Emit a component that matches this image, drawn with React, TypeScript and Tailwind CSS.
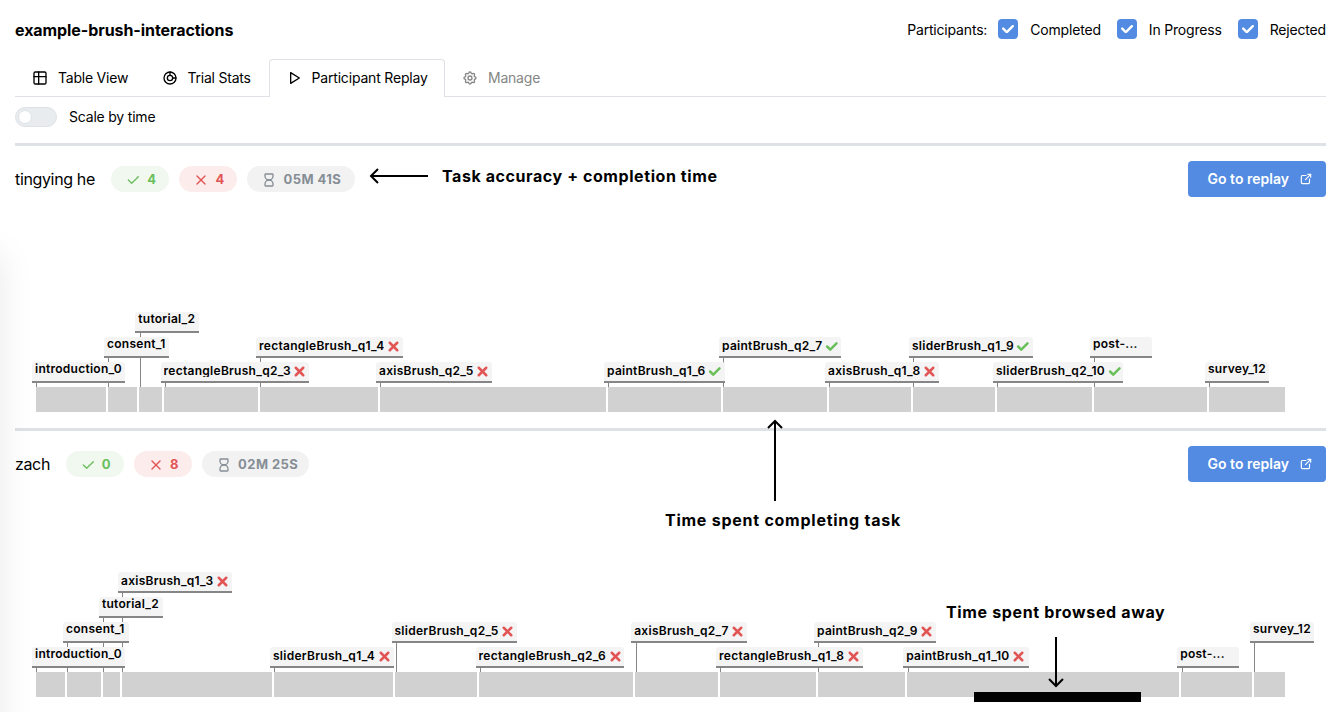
import React from "react";
import {
  TbTable,
  TbChartDonut2,
  TbPlayerPlay,
  TbSettings,
  TbCheck,
  TbX,
  TbHourglassEmpty,
  TbExternalLink,
} from "react-icons/tb";

type Result = "right" | "wrong" | "none";

interface Task {
  name: string;
  row: number;
  left: number;
  right: number;
  result: Result;
  barStart: number;
  barEnd: number;
}

const t = (
  name: string,
  row: number,
  left: number,
  right: number,
  result: Result,
  barStart: number,
  barEnd: number,
): Task => ({ name, row, left, right, result, barStart, barEnd });

const TINGYING: Task[] = [
  t("introduction_0", 1, 32, 125, "none", 36, 106),
  t("consent_1", 2, 104, 169, "none", 108, 137),
  t("tutorial_2", 3, 135.3, 199, "none", 139.4, 162),
  t("rectangleBrush_q2_3", 1, 160.5, 309, "wrong", 164, 258),
  t("rectangleBrush_q1_4", 2, 256, 403, "wrong", 260, 378),
  t("axisBrush_q2_5", 1, 376, 492, "wrong", 380, 606),
  t("paintBrush_q1_6", 1, 604, 724.5, "right", 608, 721),
  t("paintBrush_q2_7", 2, 719, 841, "right", 723, 827),
  t("axisBrush_q1_8", 1, 825, 939, "wrong", 829, 911),
  t("sliderBrush_q1_9", 2, 909, 1033, "right", 913, 995),
  t("sliderBrush_q2_10", 1, 993, 1123.4, "right", 997, 1092),
  t("post-...", 2, 1090, 1152, "none", 1094, 1206.5),
  t("survey_12", 1, 1205, 1269, "none", 1209, 1285),
];

const ZACH: Task[] = [
  t("introduction_0", 1, 32, 125, "none", 36, 65),
  t("consent_1", 2, 63, 129, "none", 67, 101),
  t("tutorial_2", 3, 99, 163, "none", 103, 119.5),
  t("axisBrush_q1_3", 4, 118, 232, "wrong", 121.5, 272),
  t("sliderBrush_q1_4", 1, 270, 394, "wrong", 274, 393.4),
  t("sliderBrush_q2_5", 2, 391.5, 517, "wrong", 395.4, 477),
  t("rectangleBrush_q2_6", 1, 475.5, 624, "wrong", 479.4, 633),
  t("axisBrush_q2_7", 2, 631.2, 747, "wrong", 635.4, 718),
  t("rectangleBrush_q1_8", 1, 716, 863, "wrong", 720, 816),
  t("paintBrush_q2_9", 2, 814, 936, "wrong", 818, 905),
  t("paintBrush_q1_10", 1, 903.2, 1029, "wrong", 907, 1178.5),
  t("post-...", 1, 1177.2, 1239.5, "none", 1181, 1251.5),
  t("survey_12", 2, 1250, 1314, "none", 1254, 1285),
];

const ORIGIN = 15;

function TaskLabel({ task }: { task: Task }) {
  const scored = task.result !== "none";
  return (
    <div
      className="absolute flex h-[21px] items-start rounded-t-[3px] border-b-2 border-[#868686] bg-[#f4f4f4] pl-[3px]"
      style={{
        left: task.left - ORIGIN,
        width: task.right - task.left,
        bottom: 29 + (task.row - 1) * 25,
      }}
    >
      <span
        className={
          scored
            ? "mt-px h-[14px] overflow-hidden whitespace-nowrap text-[12px] leading-[15px] font-semibold tracking-[0.28px]"
            : "whitespace-nowrap text-[12px] leading-[13px] font-semibold tracking-[0.26px]"
        }
      >
        {task.name}
      </span>
      {task.result === "wrong" && (
        <TbX className="mt-[1.5px] ml-[1.5px] size-[15px] shrink-0 stroke-[4] text-[#e25555]" />
      )}
      {task.result === "right" && (
        <TbCheck className="mt-[1.5px] ml-[1.5px] size-[15px] shrink-0 stroke-[4] text-[#6abf5b]" />
      )}
    </div>
  );
}

function Timeline({ tasks, away }: { tasks: Task[]; away?: [number, number] }) {
  return (
    <div className="relative mt-[90px] h-[125px]">
      {tasks.map((task) => (
        <div
          key={task.name + "-bar"}
          className="absolute bottom-0 h-[25px] bg-[#d1d1d1]"
          style={{ left: task.barStart - ORIGIN, width: task.barEnd - task.barStart }}
        />
      ))}
      {tasks.map((task) => (
        <div
          key={task.name + "-stem"}
          className="absolute bottom-[25px] w-px bg-[#868686]"
          style={{
            left: Math.round(task.left + 4.4) - ORIGIN,
            height: 4 + (task.row - 1) * 25,
          }}
        />
      ))}
      {tasks.map((task) => (
        <TaskLabel key={task.name} task={task} />
      ))}
      {away && (
        <div
          className="absolute -bottom-[5px] h-[10px] bg-black"
          style={{ left: away[0] - ORIGIN, width: away[1] - away[0] }}
        />
      )}
    </div>
  );
}

interface ParticipantProps {
  name: string;
  nameClass: string;
  correct: number;
  wrong: number;
  time: string;
  tasks: Task[];
  away?: [number, number];
  note?: React.ReactNode;
}

function Participant({ name, nameClass, correct, wrong, time, tasks, away, note }: ParticipantProps) {
  return (
    <section className="h-[285px] border-t-[3px] border-[#dee2e6] pt-[15px]">
      <div className="flex h-9 items-center">
        <h2 className={nameClass}>{name}</h2>
        <div className="flex gap-[10px] text-[13px] font-bold tracking-[0.3px]">
          <span className="flex h-[26px] w-[58.3px] items-center rounded-full bg-[#f0f8ef] pt-px pl-[14px] text-[#6abf5b]">
            <TbCheck className="mr-[6px] size-4" />
            {correct}
          </span>
          <span className="flex h-[26px] w-[58px] items-center rounded-full bg-[#fcecec] pt-px pl-[14px] text-[#e25555]">
            <TbX className="mr-[6px] size-4" />
            {wrong}
          </span>
          <span className="flex h-[26px] w-[107.4px] items-center rounded-full bg-[#f2f2f2] pt-px pl-[14px] tracking-[0.42px] whitespace-nowrap text-[#868e96]">
            <TbHourglassEmpty className="mr-[6px] size-4" />
            {time}
          </span>
        </div>
        {note}
        <button className="ml-auto flex h-9 w-[138px] items-center rounded-[4px] bg-[#528be1] pb-px pl-[19.5px] text-[14px] font-semibold tracking-[0.02px] whitespace-nowrap text-white">
          Go to replay
          <TbExternalLink className="mt-px ml-[10px] size-[14px]" />
        </button>
      </div>
      <Timeline tasks={tasks} away={away} />
    </section>
  );
}

function Filter({ label }: { label: string }) {
  return (
    <label className="flex items-center gap-3">
      <span className="flex size-5 items-center justify-center rounded-[4px] bg-[#528be1]">
        <svg viewBox="0 0 10 7" className="w-3 fill-white">
          <path d="M4 4.586L1.707 2.293A1 1 0 1 0 .293 3.707l3 3a.997.997 0 0 0 1.414 0l5-5A1 1 0 1 0 8.293.293L4 4.586z" />
        </svg>
      </span>
      {label}
    </label>
  );
}

export default function App() {
  return (
    <div
      className="relative h-[712px] w-[1335px] overflow-hidden bg-white pr-[9px] pl-[15px] text-black"
      style={{ fontFamily: 'Inter, "Liberation Sans", sans-serif' }}
    >
      <div className="absolute top-[254px] -left-[40px] h-[560px] w-[40px] shadow-[0_0_36px_rgba(0,0,0,0.09)]" />

      <header className="flex h-[59px] items-center justify-between">
        <h1 className="text-[16px] font-bold tracking-[-0.07px]">example-brush-interactions</h1>
        <div className="-mt-px flex items-center gap-4 text-[14px] tracking-[-0.18px]">
          <span className="-mr-[5px]">Participants:</span>
          <Filter label="Completed" />
          <Filter label="In Progress" />
          <Filter label="Rejected" />
        </div>
      </header>

      <nav className="flex h-[38px] border-b border-[#dee2e6] text-[14px] tracking-[-0.22px]">
        <div className="flex w-[130px] items-center gap-[10px] pl-[17px] whitespace-nowrap">
          <TbTable className="size-4" />
          Table View
        </div>
        <div className="flex w-[124px] items-center gap-[10px] pl-[16.5px] whitespace-nowrap">
          <TbChartDonut2 className="size-4" />
          Trial Stats
        </div>
        <div className="-mb-px flex w-[176px] items-center gap-[10px] rounded-t-[4px] border border-b-0 border-[#dee2e6] bg-white pb-[2px] pl-[15.5px] tracking-[-0.18px] whitespace-nowrap">
          <TbPlayerPlay className="size-4" />
          Participant Replay
        </div>
        <div className="flex items-center gap-[10px] pl-[17px] whitespace-nowrap text-[#868686]">
          <TbSettings className="size-4" />
          Manage
        </div>
      </nav>

      <div className="flex h-[46px] items-start gap-3 pt-[10px]">
        <span className="flex h-5 w-[42px] items-center rounded-full border border-[#dee2e6] bg-[#e9ecef] pl-[2px]">
          <span className="size-[14px] rounded-full border border-[#dee2e6] bg-white" />
        </span>
        <span className="text-[14px] leading-5 tracking-[-0.2px]">Scale by time</span>
      </div>

      <Participant
        name="tingying he"
        nameClass="w-[96.2px] text-[16px] tracking-[-0.35px] whitespace-nowrap"
        correct={4}
        wrong={4}
        time="05M 41S"
        tasks={TINGYING}
        note={
          <div className="mb-[7px] ml-[14.1px] flex items-center gap-[14px]">
            <svg width="59" height="16" viewBox="0 0 59 16" fill="none" stroke="black" strokeWidth="2">
              <path d="M59 8H2M9 1L2 8l7 7" />
            </svg>
            <span className="text-[16px] font-bold tracking-[0.58px] whitespace-nowrap">Task accuracy + completion time</span>
          </div>
        }
      />
      <Participant
        name="zach"
        nameClass="w-[50.8px] text-[16px] tracking-[-0.35px] whitespace-nowrap"
        correct={0}
        wrong={8}
        time="02M 25S"
        tasks={ZACH}
        away={[973.5, 1141.4]}
      />

      <div className="absolute top-[419px] left-[665px] flex w-[237px] flex-col items-start">
        <svg className="ml-[102px]" width="16" height="82" viewBox="0 0 16 82" fill="none" stroke="black" strokeWidth="2">
          <path d="M8 82V2M1 9l7-7 7 7" />
        </svg>
        <span className="mt-[7px] text-[16px] font-bold tracking-[0.75px] whitespace-nowrap">Time spent completing task</span>
      </div>

      <div className="absolute top-[600px] left-[946px] flex w-[222px] flex-col items-start">
        <span className="text-[16px] font-bold tracking-[0.65px] whitespace-nowrap">Time spent browsed away</span>
        <svg className="mt-[13px] ml-[102px]" width="16" height="51" viewBox="0 0 16 51" fill="none" stroke="black" strokeWidth="2">
          <path d="M8 0v49M1 42l7 7 7-7" />
        </svg>
      </div>
    </div>
  );
}
